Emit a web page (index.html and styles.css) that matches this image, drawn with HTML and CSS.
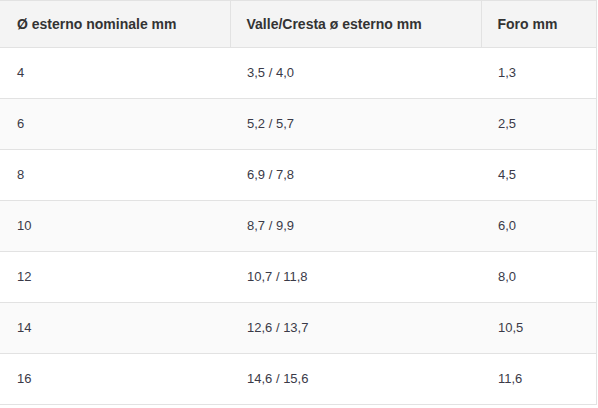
FILE: index.html
```html
<!DOCTYPE html>
<html lang="it">
<head>
<meta charset="utf-8">
<link rel="stylesheet" href="styles.css">
</head>
<body>
<table class="spec">
  <thead>
    <tr><th class="c1">Ø esterno nominale mm</th><th class="c2">Valle/Cresta ø esterno mm</th><th class="c3">Foro mm</th></tr>
  </thead>
  <tbody>
    <tr><td>4</td><td>3,5 / 4,0</td><td>1,3</td></tr>
    <tr><td>6</td><td>5,2 / 5,7</td><td>2,5</td></tr>
    <tr><td>8</td><td>6,9 / 7,8</td><td>4,5</td></tr>
    <tr><td>10</td><td>8,7 / 9,9</td><td>6,0</td></tr>
    <tr><td>12</td><td>10,7 / 11,8</td><td>8,0</td></tr>
    <tr><td>14</td><td>12,6 / 13,7</td><td>10,5</td></tr>
    <tr><td>16</td><td>14,6 / 15,6</td><td>11,6</td></tr>
  </tbody>
</table>
</body>
</html>
```
FILE: styles.css
```css
html, body { margin: 0; padding: 0; background: #fff; }
body { font-family: "Liberation Sans", Arial, sans-serif; }
.spec {
  border-collapse: collapse;
  width: 597px;
  table-layout: fixed;
  border-top: 1px solid #e2e2e2;
  border-right: 1px solid #e2e2e2;
}
.spec th {
  background: #f4f4f4;
  color: #333;
  font-size: 14px;
  font-weight: bold;
  text-align: left;
  line-height: 16px;
  height: 47px;
  padding: 0 0 0 16px;
  box-sizing: border-box;
  border-bottom: 1px solid #e2e2e2;
  border-left: 1px solid #e2e2e2;
}
.spec th.c1 { border-left: none; padding-left: 17px; width: 230px; }
.spec th.c2 { width: 251px; }
.spec td {
  color: #3a3a48;
  font-size: 13px;
  line-height: 16px;
  height: 51px;
  padding: 0 0 0 17px;
  box-sizing: border-box;
  border-bottom: 1px solid #e2e2e2;
}
.spec tbody tr:nth-child(even) td { background: #fafafa; }
```
